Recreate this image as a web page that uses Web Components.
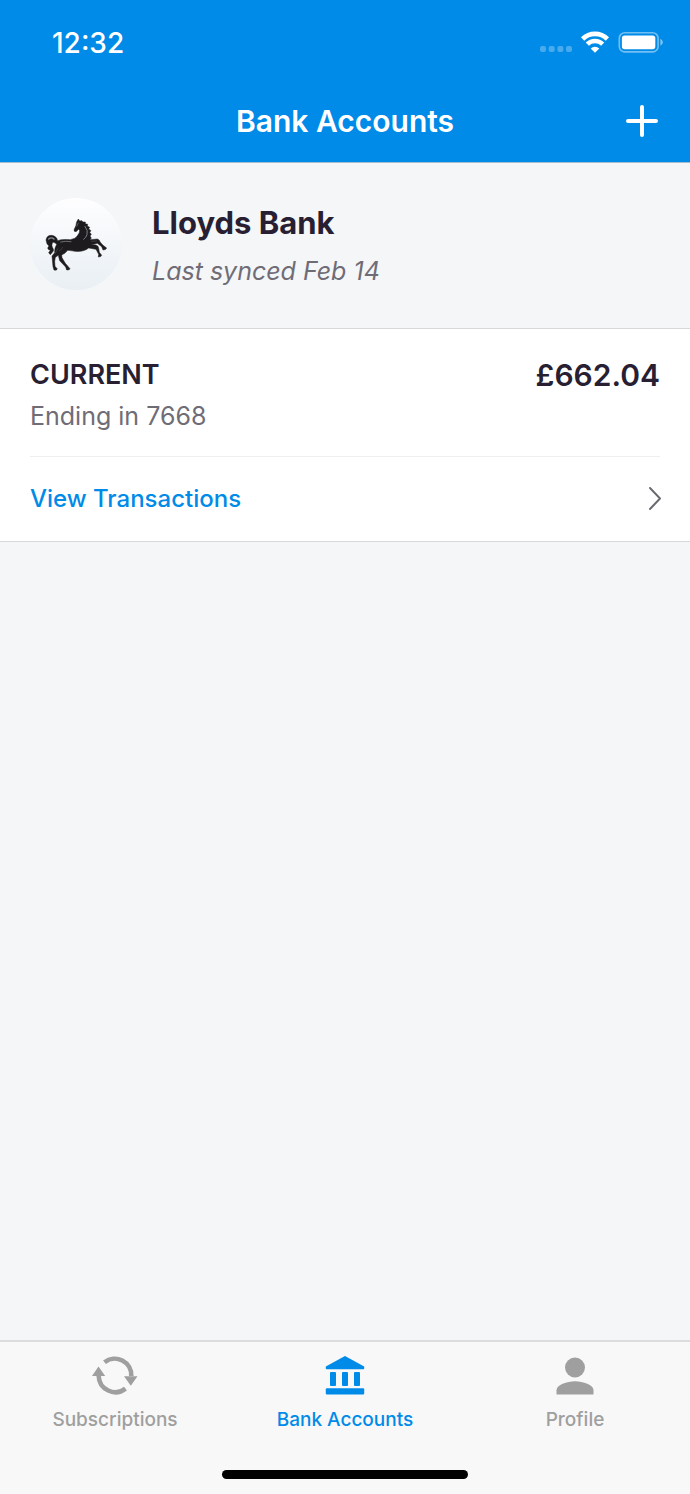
<!DOCTYPE html>
<html lang="en">
<head>
<meta charset="utf-8">
<meta name="viewport" content="width=device-width, initial-scale=1">
<title>Bank Accounts</title>
<style>
  html, body { margin: 0; background: #f4f6f8; }
  body { font-family: Inter, "Liberation Sans", sans-serif; color: #291f33; }
</style>
</head>
<body>
<bank-app>
  <status-bar slot="header" time="12:32"></status-bar>
  <nav-bar slot="header">Bank Accounts</nav-bar>
  <bank-header>
    <horse-logo slot="logo"></horse-logo>
    <span slot="name">Lloyds Bank</span>
    <span slot="synced">Last synced Feb 14</span>
  </bank-header>
  <account-card>
    <span slot="type">CURRENT</span>
    <span slot="number">Ending in 7668</span>
    <span slot="balance">£662.04</span>
    <span slot="action">View Transactions</span>
  </account-card>
  <tab-bar slot="footer">
    <tab-item icon="sync">Subscriptions</tab-item>
    <tab-item icon="bank" active>Bank Accounts</tab-item>
    <tab-item icon="person">Profile</tab-item>
  </tab-bar>
</bank-app>
<script>
const define = (name, render) => customElements.define(name, class extends HTMLElement {
  constructor() {
    super();
    this.attachShadow({ mode: 'open' }).innerHTML = render(this);
  }
});

define('bank-app', () => `
  <style>
    :host { display: flex; flex-direction: column; min-height: 100vh; }
    header { background: #008be8; color: #fff; border-bottom: 1px solid #a9bccb; }
    main { flex: 1; }
  </style>
  <header><slot name="header"></slot></header>
  <main><slot></slot></main>
  <footer><slot name="footer"></slot></footer>`);

define('status-bar', el => `
  <style>
    :host { display: flex; align-items: center; justify-content: space-between; box-sizing: border-box;
            height: 80px; padding: 5px 26px 0 52px; }
    time { font-size: 28px; line-height: 36px; font-weight: 500; }
    svg { display: block; }
  </style>
  <time>${el.getAttribute('time')}</time>
  <svg width="124" height="24" viewBox="0 1 124 24" fill="#fff" aria-hidden="true">
    <g opacity=".28"><rect x="0" y="16" width="6" height="6" rx="2"/><rect x="8.700" y="16" width="6" height="6" rx="2"/><rect x="17.400" y="16" width="6" height="6" rx="2"/><rect x="26" y="16" width="6" height="6" rx="2"/></g>
    <g fill="none" stroke="#fff" stroke-width="4.600">
      <path d="M42.600 9a17.600 17.600 0 0 1 24.800 0"/>
      <path d="M47.300 14.100a11 11 0 0 1 15.400 0"/>
    </g>
    <path d="M50.700 18.500a6 6 0 0 1 8.600 0L55 22.800z"/>
    <rect x="79.300" y="2.700" width="38.800" height="19.200" rx="5.500" fill="none" stroke="#fff" stroke-opacity=".45" stroke-width="1.600"/>
    <rect x="81.900" y="5.400" width="33.400" height="13.800" rx="2.600"/>
    <path d="M120.400 8.800q2.400 1 2.400 3.500t-2.400 3.500z" opacity=".5"/>
  </svg>`);

define('nav-bar', () => `
  <style>
    :host { display: grid; grid-template-columns: 1fr auto 1fr; align-items: center; height: 82px; padding: 0 30px; }
    h1 { grid-column: 2; margin: 0; font-size: 30px; line-height: 40px; font-weight: 600; }
    button { justify-self: end; border: 0; padding: 0; background: none; color: inherit; }
    svg { display: block; }
  </style>
  <h1><slot></slot></h1>
  <button type="button" aria-label="Add account">
    <svg width="36" height="36" viewBox="0 0 36 36" stroke="#fff" stroke-width="4" stroke-linecap="round"><path d="M18 4v28M4 18h28"/></svg>
  </button>`);

define('horse-logo', () => `
  <style>
    :host { display: block; width: 92px; height: 92px; border-radius: 50%; background: linear-gradient(#fefeff, #e9eff4); }
    svg { display: block; }
  </style>
  <svg width="92" height="92" viewBox="30 24 276 276" role="img" aria-label="Black horse">
    <path fill="#1d1b1d" stroke="#1d1b1d" stroke-width="1.500" stroke-linejoin="round" d="M175 87L179 93L186 92L188 96L196 96L196 101L203 103L202 108L209 112L206 117L213 122L209 127L214 133L210 138L214 144L210 149
      L232 147Q238 148 241 157L249 166L260 174Q258 180 249 180L245 170L232 160L214 165
      L228 165Q236 167 236 175L238 187L245 196Q244 201 235 201L236 193L228 178L206 174
      Q192 186 165 184Q148 181 143 181Q136 191 125 195L126 203L136 220L150 236Q149 241 140 240L137 231L119 212L115 196
      L106 202L104 214L105 229L112 237Q110 242 102 240L99 230L96 198L104 188Q103 175 110 163L106 159Q99 154 97 160
      Q94 167 98 173Q104 181 97 187L91 194L86 188L91 181Q78 177 87 168Q79 162 78 150Q80 136 94 136Q109 137 113 152
      Q125 147 151 149Q167 147 173 136Q179 129 179 122L176 117L170 124Q162 127 162 120L168 106Q168 96 175 87Z"/>
    <g fill="none" stroke="#8b9196" stroke-width="3" stroke-linecap="round">
      <path d="M195 109Q205 121 201 134Q198 143 191 148" opacity=".85"/>
      <path d="M86 147Q94 140 102 147" stroke-width="4"/>
      <path d="M122 156Q137 152 153 155" opacity=".7"/>
      <path d="M113 176L106 190M118 183Q125 179 128 172M214 154L230 153" stroke-width="1.500" opacity=".5"/>
      <path d="M175 99L170 109" stroke-width="2" opacity=".8"/>
    </g>
  </svg>`);

define('bank-header', () => `
  <style>
    :host { display: flex; align-items: center; gap: 30px; padding: 35px 30px 38px; border-bottom: 1px solid #d6d8da; }
    .text { display: flex; flex-direction: column; gap: 14px; padding-top: 4px; }
    h2, p { margin: 0; }
    h2 { font-size: 31px; line-height: 36px; font-weight: 700; }
    p { font-size: 25px; line-height: 32px; font-style: italic; color: #706c76; }
  </style>
  <slot name="logo"></slot>
  <div class="text"><h2><slot name="name"></slot></h2><p><slot name="synced"></slot></p></div>`);

define('account-card', () => `
  <style>
    :host { display: block; background: #fff; border-bottom: 1px solid #d6d8da; padding: 0 30px; }
    .summary { display: flex; justify-content: space-between; padding: 28px 0 24px; border-bottom: 1px solid #eeeff1; }
    .text { display: flex; flex-direction: column; gap: 7px; }
    h3, p { margin: 0; }
    h3 { font-size: 27px; line-height: 36px; font-weight: 600; }
    .text p { font-size: 25px; line-height: 32px; color: #706c76; }
    .balance { font-size: 30px; line-height: 36px; font-weight: 600; }
    a { display: flex; align-items: center; justify-content: space-between; height: 84px;
        font-size: 24px; line-height: 32px; font-weight: 500; color: #008be8; text-decoration: none; }
    svg { display: block; }
  </style>
  <div class="summary">
    <div class="text"><h3><slot name="type"></slot></h3><p><slot name="number"></slot></p></div>
    <p class="balance"><slot name="balance"></slot></p>
  </div>
  <a href="#transactions"><slot name="action"></slot>
    <svg width="12" height="24" viewBox="0 0 12 24" overflow="visible" fill="none" stroke="#6b6870" stroke-width="1.900" stroke-linecap="round" stroke-linejoin="round" aria-hidden="true"><path d="M2 1L12 11.500L2 22"/></svg>
  </a>`);

define('tab-bar', () => `
  <style>
    :host { display: block; padding-bottom: 15px; background: #f8f8f8; border-top: 2px solid #dbdcde; }
    nav { display: grid; grid-template-columns: repeat(3, 1fr); height: 128px; }
    .home { width: 246px; height: 9px; margin: 0 auto; border-radius: 5px; background: #000; }
  </style>
  <nav><slot></slot></nav>
  <div class="home"></div>`);

const icons = {
  sync: `<g transform="translate(0 2)"><g fill="none" stroke="currentColor" stroke-width="4.600">
           <path d="M13.500 8.200A16.600 16.600 0 0 1 40.300 22"/><path d="M34.500 34.600A16.600 16.600 0 0 1 7.700 22"/></g>
         <path d="M33 22.300h13.500L39.800 31.800zM1 22h13.200L7.500 12.500z"/></g>`,
  bank: `<path d="M24 4l19.200 10.600V16.500q0 .8-.8.800H5.600Q4.800 17.300 4.800 16.500v-1.900z"/>
         <rect x="9" y="20" width="6" height="14" rx="1"/><rect x="21" y="20" width="6" height="14" rx="1"/><rect x="33" y="20" width="6" height="14" rx="1"/>
         <rect x="4.800" y="36.200" width="38.400" height="6.300" rx="1"/>`,
  person: `<circle cx="24" cy="15.500" r="10"/><path d="M5.500 42.500v-4.200C5.500 33 16 29.300 24 29.300s18.500 3.700 18.500 9v4.200z"/>`
};

define('tab-item', el => `
  <style>
    :host { display: block; color: #9f9f9f; }
    :host([active]) { color: #008be8; }
    a { display: flex; flex-direction: column; align-items: center; gap: 12px; padding-top: 10px;
        color: inherit; text-decoration: none; font-size: 19px; line-height: 24px; font-weight: 500; }
    svg { display: block; }
  </style>
  <a href="#${el.getAttribute('icon')}">
    <svg width="48" height="44" viewBox="0 0 48 44" fill="currentColor" aria-hidden="true">${icons[el.getAttribute('icon')]}</svg>
    <slot></slot>
  </a>`);
</script>
</body>
</html>
